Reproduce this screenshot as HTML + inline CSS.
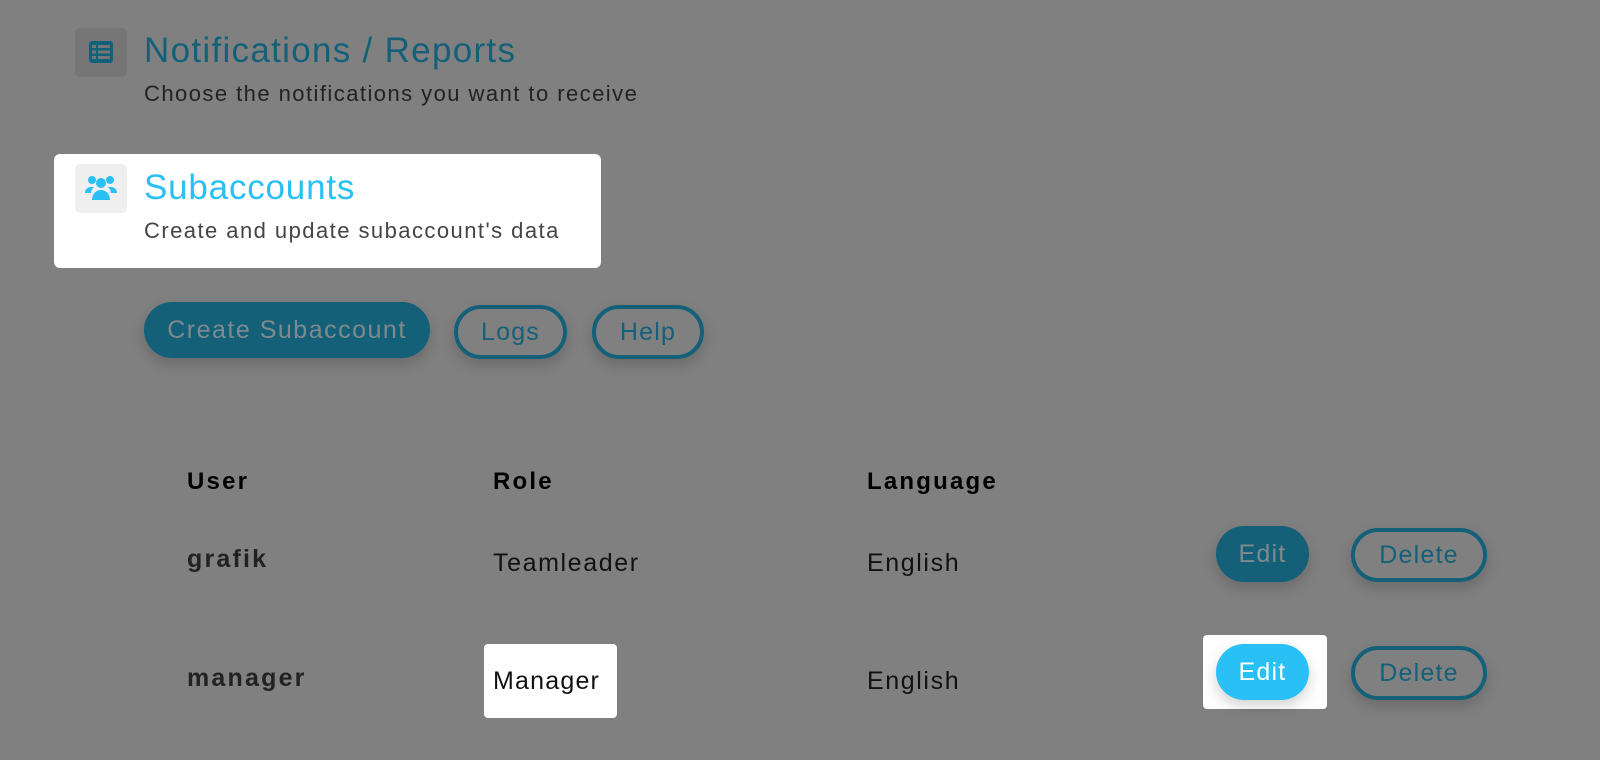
<!DOCTYPE html>
<html><head><style>
body{margin:0;width:1600px;height:760px;background:#808080;font-family:"Liberation Sans",sans-serif;position:relative;overflow:hidden}
.a{position:absolute;white-space:nowrap}
.ib{position:absolute;width:52px;height:49px;border-radius:5px}
.btn{position:absolute;box-sizing:border-box;border-radius:30px;display:flex;align-items:center;justify-content:center;font-size:25px;letter-spacing:1.2px;box-shadow:0 6px 14px rgba(0,0,0,.18)}
.out{border:4px solid #146079;color:#146079}
.h{font-weight:bold;font-size:24px;color:#000;letter-spacing:2.2px}
.c{font-size:25px;color:#111;letter-spacing:1.6px}
.u{font-weight:bold;font-size:25px;color:#222;letter-spacing:2.2px}
</style></head><body>
<div class="ib" style="left:75px;top:28px;background:#767676"></div>
<svg class="a" style="left:88px;top:40px" width="26" height="24" viewBox="0 0 26 24"><rect x="1" y="1" width="24" height="22" rx="3" fill="#146079"/><g fill="#767676"><rect x="4" y="5" width="4" height="3"/><rect x="10" y="5" width="12" height="3"/><rect x="4" y="10.5" width="4" height="3"/><rect x="10" y="10.5" width="12" height="3"/><rect x="4" y="16" width="4" height="3"/><rect x="10" y="16" width="12" height="3"/></g></svg>
<div class="a" style="left:144px;top:31px;font-size:35px;color:#146079;letter-spacing:1.3px">Notifications / Reports</div>
<div class="a" style="left:144px;top:81px;font-size:22px;color:#222;letter-spacing:1.45px">Choose the notifications you want to receive</div>

<div class="a" style="left:54px;top:154px;width:547px;height:114px;background:#fff;border-radius:6px"></div>
<div class="ib" style="left:75px;top:164px;background:#efefef"></div>
<svg class="a" style="left:84px;top:174px" width="34" height="28" viewBox="0 0 34 28"><g fill="#29c0f5"><circle cx="8" cy="6" r="4"/><circle cx="26" cy="6" r="4"/><circle cx="17" cy="9" r="5"/><path d="M1 19c0-4 3-6 6-6h3c-2 2-3 4-3 6z"/><path d="M33 19c0-4-3-6-6-6h-3c2 2 3 4 3 6z"/><path d="M8 26c0-6 4-10 9-10s9 4 9 10z"/></g></svg>
<div class="a" style="left:144px;top:168px;font-size:35px;color:#29c0f5;letter-spacing:0.8px">Subaccounts</div>
<div class="a" style="left:144px;top:218px;font-size:22px;color:#444;letter-spacing:1.45px">Create and update subaccount's data</div>

<div class="btn" style="left:144px;top:302px;width:286px;height:56px;background:#146079;color:#7f8a8e;letter-spacing:1.5px">Create Subaccount</div>
<div class="btn out" style="left:454px;top:305px;width:113px;height:54px">Logs</div>
<div class="btn out" style="left:592px;top:305px;width:112px;height:54px">Help</div>

<div class="a h" style="left:187px;top:468px">User</div>
<div class="a h" style="left:493px;top:468px">Role</div>
<div class="a h" style="left:867px;top:468px">Language</div>

<div class="a u" style="left:187px;top:545px">grafik</div>
<div class="a c" style="left:493px;top:549px">Teamleader</div>
<div class="a c" style="left:867px;top:549px">English</div>
<div class="btn" style="left:1216px;top:526px;width:93px;height:56px;background:#146079;color:#7f8a8e">Edit</div>
<div class="btn out" style="left:1351px;top:528px;width:136px;height:54px">Delete</div>

<div class="a u" style="left:187px;top:664px">manager</div>
<div class="a" style="left:484px;top:644px;width:133px;height:74px;background:#fff;border-radius:4px"></div>
<div class="a c" style="left:493px;top:667px;letter-spacing:1.2px">Manager</div>
<div class="a c" style="left:867px;top:667px">English</div>
<div class="a" style="left:1203px;top:635px;width:124px;height:74px;background:#fff;border-radius:4px"></div>
<div class="btn" style="left:1216px;top:644px;width:93px;height:56px;background:#29c0f5;color:#fff">Edit</div>
<div class="btn out" style="left:1351px;top:646px;width:136px;height:54px">Delete</div>
</body></html>
